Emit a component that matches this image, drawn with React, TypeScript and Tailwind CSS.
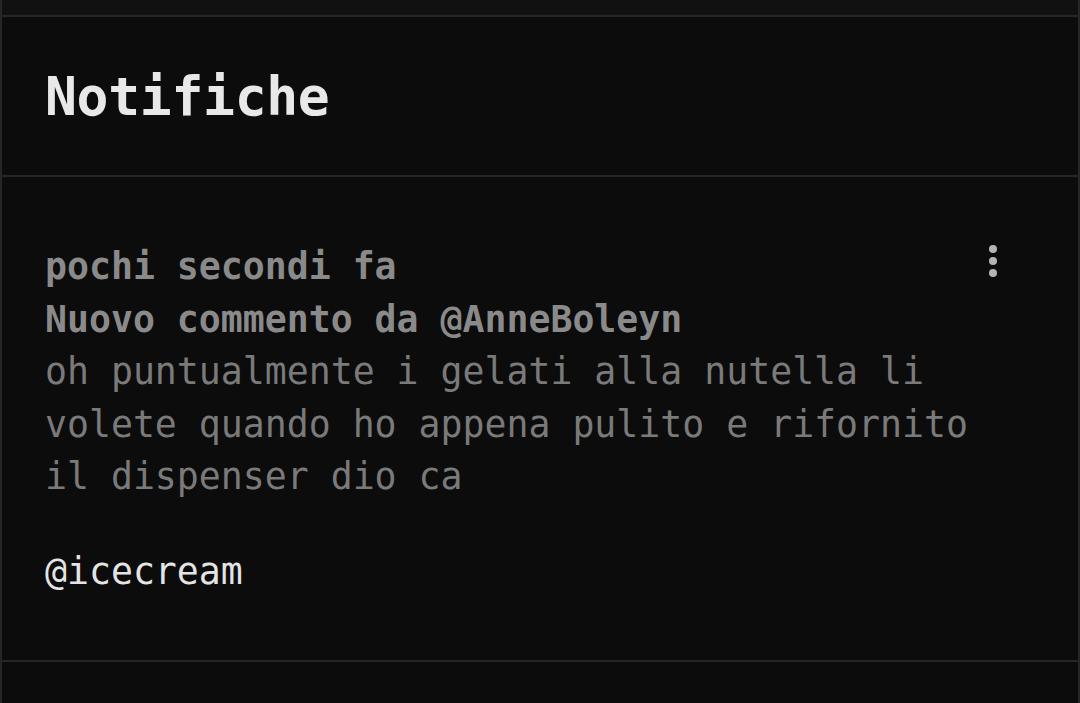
const KebabIcon = () => (
  <svg width="24" height="40" viewBox="0 0 24 40" className="shrink-0">
    <circle cx="12" cy="8" r="4" fill="#b4b4b4" />
    <circle cx="12" cy="20" r="4" fill="#b4b4b4" />
    <circle cx="12" cy="32" r="4" fill="#b4b4b4" />
  </svg>
);

export default function App() {
  return (
    <div
      className="w-[1080px] h-[703px] overflow-hidden bg-[#0c0c0c] border-x-2 border-[#262626] flex flex-col"
      style={{ fontFamily: '"DejaVu Sans Mono", "Liberation Mono", monospace' }}
    >
      <div className="h-[17px] shrink-0 bg-[#111111] border-b-2 border-[#262626]" />
      <header className="h-[160px] shrink-0 flex items-center px-[43px] border-b-2 border-[#262626]">
        <h1 className="text-[53px] font-bold text-[#e8e8e8] leading-none tracking-[-0.3px]">Notifiche</h1>
      </header>
      <section className="shrink-0 border-b-2 border-[#262626] pt-[64px] pb-[62px] pl-[43px] pr-[73px] flex justify-between">
        <div className="text-[36.5px] leading-[52.5px]">
          <p className="font-bold text-[#8a8a8a]">pochi secondi fa</p>
          <p className="font-bold text-[#8a8a8a]">Nuovo commento da @AnneBoleyn</p>
          <p className="text-[#7a7a7a]">
            oh puntualmente i gelati alla nutella li
            <br />
            volete quando ho appena pulito e rifornito
            <br />
            il dispenser dio ca
          </p>
          <p className="mt-[42px] text-[#e4e4e4]">@icecream</p>
        </div>
        <div>
          <KebabIcon />
        </div>
      </section>
      <div className="flex-1" />
    </div>
  );
}
